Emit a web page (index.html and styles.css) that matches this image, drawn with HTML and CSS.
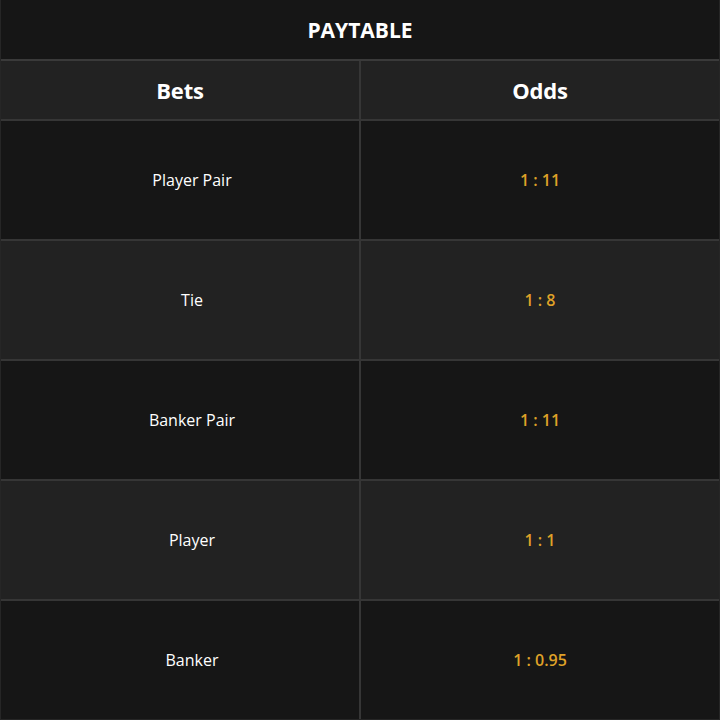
FILE: index.html
```html
<!DOCTYPE html>
<html>
<head>
<meta charset="utf-8">
<link rel="stylesheet" href="styles.css">
</head>
<body>
<div class="paytable">
  <div class="title">PAYTABLE</div>
  <div class="row head">
    <div class="cell">Bets</div>
    <div class="cell">Odds</div>
  </div>
  <div class="row dark">
    <div class="cell bet">Player Pair</div>
    <div class="cell odds">1 : 11</div>
  </div>
  <div class="row light">
    <div class="cell bet">Tie</div>
    <div class="cell odds">1 : 8</div>
  </div>
  <div class="row dark">
    <div class="cell bet">Banker Pair</div>
    <div class="cell odds">1 : 11</div>
  </div>
  <div class="row light">
    <div class="cell bet">Player</div>
    <div class="cell odds">1 : 1</div>
  </div>
  <div class="row dark last">
    <div class="cell bet">Banker</div>
    <div class="cell odds">1 : 0.95</div>
  </div>
</div>
</body>
</html>
```
FILE: styles.css
```css
* { box-sizing: border-box; }
html, body { margin: 0; padding: 0; background: #161616; }
.paytable {
  width: 720px;
  height: 720px;
  display: flex;
  flex-direction: column;
  font-family: "Open Sans", "Lato", sans-serif;
  color: #ffffff;
  border-left: 1px solid #262626;
  border-right: 1px solid #262626;
  border-bottom: 1px solid #262626;
}
.title {
  height: 61px;
  flex: none;
  display: flex;
  align-items: center;
  justify-content: center;
  font-size: 21px;
  font-weight: 700;
  background: #161616;
  border-bottom: 2px solid #3a3a3a;
}
.row {
  display: grid;
  grid-template-columns: 360px 1fr;
  height: 120px;
  flex: none;
  border-bottom: 2px solid #363636;
}
.row.head { height: 60px; background: #222222; }
.row.dark { background: #161616; }
.row.light { background: #222222; }
.row.last { border-bottom: none; flex: 1; }
.cell {
  display: flex;
  align-items: center;
  justify-content: center;
  font-size: 16px;
  font-weight: 500;
}
.row.head .cell { font-size: 22px; font-weight: 700; letter-spacing: -0.2px; }
.cell:first-child { border-right: 2px solid #363636; }
.cell.bet { padding-left: 24px; }
.odds { color: #dfa128; font-weight: 600; }
```
